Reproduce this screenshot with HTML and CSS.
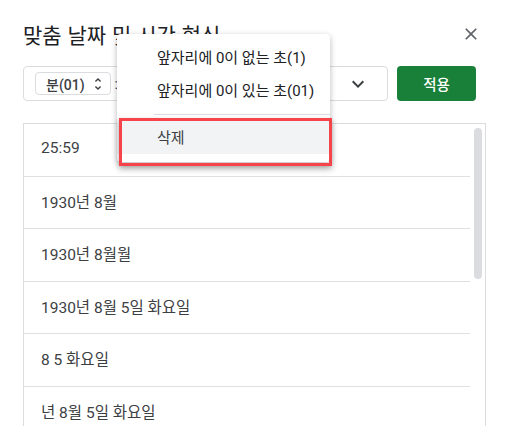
FILE: index.html
```html
<!DOCTYPE html>
<html lang="ko">
  <head>
    <meta charset="UTF-8" />
    <meta name="viewport" content="width=device-width, initial-scale=1.0" />
    <title>맞춤 날짜 및 시간 형식</title>
    <link rel="stylesheet" href="styles.css">
  </head>
  <body>
    <div class="dialog">
      <div class="header">
        <h1 class="title">맞춤 날짜 및 시간 형식</h1>
        <button class="close" aria-label="닫기">
          <svg width="20" height="20" viewBox="0 0 24 24"><path d="M19 6.41L17.59 5 12 10.59 6.41 5 5 6.41 10.59 12 5 17.59 6.41 19 12 13.41 17.59 19 19 17.59 13.41 12z"/></svg>
        </button>
      </div>

      <!-- format editor + apply -->
      <div class="controls">
        <div class="format-box">
          <span class="chip">분(01)
            <svg width="16" height="16" viewBox="0 0 24 24"><path d="M12 5.83L15.17 9l1.41-1.41L12 3 7.41 7.59 8.83 9 12 5.83zm0 12.34L8.83 15l-1.41 1.41L12 21l4.59-4.59L15.17 15 12 18.17z"/></svg>
          </span>
          <span class="sep">:</span>
          <span class="chevron">
            <svg width="24" height="24" viewBox="0 0 24 24"><path d="M16.59 8.59L12 13.17 7.41 8.59 6 10l6 6 6-6z"/></svg>
          </span>
        </div>
        <button class="apply">적용</button>
      </div>

      <div class="list">
        <div class="rows">
          <div class="row">25:59</div>
          <div class="row">1930년 8월</div>
          <div class="row">1930년 8월월</div>
          <div class="row">1930년 8월 5일 화요일</div>
          <div class="row">8 5 화요일</div>
          <div class="row">년 8월 5일 화요일</div>
        </div>
        <div class="track"><div class="thumb"></div></div>
      </div>
    </div>

    <!-- dropdown menu over the dialog -->
    <div class="menu">
      <div class="item">앞자리에 0이 없는 초(1)</div>
      <div class="item">앞자리에 0이 있는 초(01)</div>
      <div class="divider"></div>
      <div class="item delete">삭제</div>
    </div>
    <div class="mark"></div>
  </body>
</html>
```

FILE: styles.css
```css
body {
  margin: 0;
  background: #fff;
  font-family: Roboto, "Noto Sans CJK KR", sans-serif;
  color: #3c4043;
  overflow: hidden;
  height: 426px;
}
.dialog {
  padding: 20px 22px 0 23px;
}
.header {
  display: flex;
  align-items: center;
  justify-content: space-between;
  height: 28px;
}
.title {
  margin: 0;
  font-family: "Noto Sans CJK KR", sans-serif;
  font-weight: 400;
  font-size: 21px;
  line-height: 28px;
  color: #202124;
}
.close {
  width: 24px;
  height: 24px;
  padding: 0;
  margin-right: 3px;
  border: none;
  background: none;
  display: flex;
  align-items: center;
  justify-content: center;
  fill: #5f6368;
}
.controls {
  display: flex;
  gap: 9px;
  margin: 18px 10px 0 0;
  height: 35px;
}
.format-box {
  flex: 1;
  display: flex;
  align-items: center;
  border: 1px solid #dadce0;
  border-radius: 4px;
  padding: 0 17px 0 11px;
}
.chip {
  display: flex;
  align-items: center;
  gap: 5px;
  height: 21px;
  padding: 0 4px 0 10px;
  border: 1px solid #dadce0;
  border-radius: 4px;
  font-size: 14px;
  font-weight: 500;
  fill: #3c4043;
}
.sep {
  margin-left: 4px;
  font-size: 14px;
}
.chevron {
  margin-left: auto;
  display: flex;
  fill: #3c4043;
}
.apply {
  width: 79px;
  border: none;
  border-radius: 4px;
  background: #188038;
  color: #fff;
  font-family: "Noto Sans CJK KR", sans-serif;
  font-size: 14.5px;
  font-weight: 500;
}
.list {
  display: flex;
  margin-top: 22px;
  border: 1px solid #dadce0;
  border-bottom: none;
}
.rows {
  flex: 1;
}
.row {
  display: flex;
  align-items: center;
  padding: 0 0 3px 17px;
  box-sizing: border-box;
  height: 52.5px;
  border-bottom: 1px solid #e0e0e0;
  font-size: 15.5px;
}
.track {
  width: 15px;
  padding-top: 4px;
}
.thumb {
  width: 8px;
  height: 151px;
  margin-left: 4px;
  border-radius: 4px;
  background: #dadce0;
}
.menu {
  position: absolute;
  left: 117px;
  top: 34px;
  width: 213px;
  padding: 6px 0 8px;
  background: #fff;
  border-radius: 4px;
  box-shadow: 0 2px 6px rgba(0, 0, 0, 0.28);
}
.item {
  height: 33px;
  display: flex;
  align-items: center;
  padding-left: 40px;
  font-size: 15px;
  color: #202124;
}
.divider {
  height: 1px;
  margin: 8px 0 4px 37px;
  background: #dadce0;
}
.item.delete {
  height: 35px;
  background: #f1f3f4;
  color: #3c4043;
}
.mark {
  position: absolute;
  left: 119px;
  top: 118px;
  width: 207px;
  height: 42px;
  border: 3px solid #f7444b;
  box-shadow: 0 3px 6px rgba(0, 0, 0, 0.3);
}
```
